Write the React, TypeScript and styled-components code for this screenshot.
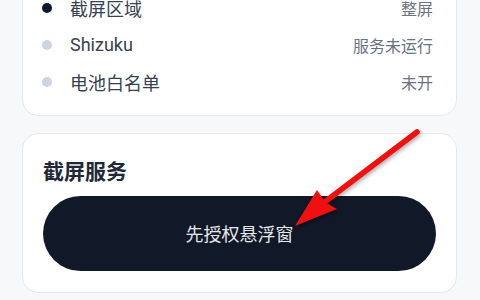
import styled, { createGlobalStyle } from "styled-components";

const GlobalStyle = createGlobalStyle`
  * { box-sizing: border-box; }
  html, body {
    margin: 0;
    padding: 0;
    background: #f7f8fa;
  }
  body {
    font-family: "Roboto", "Noto Sans CJK SC", sans-serif;
  }
`;

type Status = {
  label: string;
  value: string;
  active?: boolean;
};

const statuses: Status[] = [
  { label: "截屏区域", value: "整屏", active: true },
  { label: "Shizuku", value: "服务未运行" },
  { label: "电池白名单", value: "未开" },
];

const App = () => {
  return (
    <>
      <GlobalStyle />
      <StyledScreen>
        <StyledPage>
          <StyledStatusCard>
            {statuses.map((s) => (
              <StyledRow key={s.label}>
                <StyledDot $active={s.active} />
                <StyledLabel>{s.label}</StyledLabel>
                <StyledValue>{s.value}</StyledValue>
              </StyledRow>
            ))}
          </StyledStatusCard>
          <StyledServiceCard>
            <StyledTitle>截屏服务</StyledTitle>
            <StyledButton type="button">先授权悬浮窗</StyledButton>
          </StyledServiceCard>
        </StyledPage>
        <StyledArrow viewBox="0 0 480 300" width="480" height="300">
          <line
            x1="417"
            y1="132"
            x2="322"
            y2="204"
            stroke="#f01010"
            strokeWidth="5.5"
            strokeLinecap="round"
          />
          <polygon points="295,226 317,190 325,202 337,209" fill="#f01010" />
        </StyledArrow>
      </StyledScreen>
    </>
  );
};

export default App;

const StyledScreen = styled.div`
  position: relative;
  width: 480px;
  height: 300px;
  overflow: hidden;
`;

const StyledPage = styled.main`
  display: flex;
  flex-direction: column;
  gap: 17px;
  margin-top: -30px;
  padding: 0 23px 0 22px;
`;

const StyledCard = styled.section`
  background: #ffffff;
  border: 1px solid #e6e8ec;
  border-radius: 16px;
`;

const StyledStatusCard = styled(StyledCard)`
  display: flex;
  flex-direction: column;
  padding: 18px 23px 15px 19px;
`;

const StyledRow = styled.div`
  display: flex;
  align-items: center;
  height: 37px;
`;

const StyledDot = styled.span<{ $active?: boolean }>`
  flex: none;
  width: 10px;
  height: 10px;
  border-radius: 50%;
  background: ${({ $active }) => ($active ? "#111827" : "#cdd5e0")};
  margin-right: 18px;
`;

const StyledLabel = styled.span`
  flex: 1;
  font-size: 18px;
  color: #374151;
`;

const StyledValue = styled.span`
  font-size: 16px;
  color: #6b7280;
`;

const StyledServiceCard = styled(StyledCard)`
  display: flex;
  flex-direction: column;
  gap: 11px;
  padding: 25px 20px 21px 20px;
`;

const StyledTitle = styled.h2`
  margin: 0;
  font-size: 21px;
  line-height: 26px;
  font-weight: 700;
  color: #1f2937;
`;

const StyledButton = styled.button`
  height: 75px;
  border: none;
  border-radius: 38px;
  background: #111827;
  color: #e5e7eb;
  font-family: inherit;
  font-size: 18px;
  font-weight: 400;
  padding: 0 0 2px;
`;

const StyledArrow = styled.svg`
  position: absolute;
  top: 0;
  left: 0;
  pointer-events: none;
  filter: drop-shadow(1px 2px 2px rgba(0, 0, 0, 0.35));
`;
